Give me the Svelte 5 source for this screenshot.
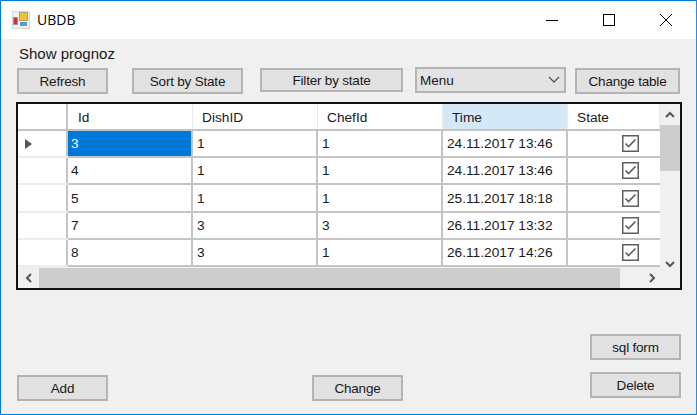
<script>
	const columns = ['Id', 'DishID', 'ChefId', 'Time', 'State'];
	const rows = [
		{ id: 3, dish: 1, chef: 1, time: '24.11.2017 13:46' },
		{ id: 4, dish: 1, chef: 1, time: '24.11.2017 13:46' },
		{ id: 5, dish: 1, chef: 1, time: '25.11.2017 18:18' },
		{ id: 7, dish: 3, chef: 3, time: '26.11.2017 13:32' },
		{ id: 8, dish: 3, chef: 1, time: '26.11.2017 14:26' }
	];
</script>

<div class="window">
	<header class="titlebar">
		<svg class="app-icon" width="18" height="18" viewBox="0 0 18 18">
			<rect width="18" height="18" fill="#d8d8d8" />
			<rect x="1" y="1" width="16" height="16" fill="#f1f1f1" />
			<rect x="7.5" y="1.5" width="8" height="8" fill="#f2c22e" stroke="#b0a080" />
			<rect x="1.5" y="6.5" width="4" height="7" fill="#c8352c" stroke="#999" />
			<rect x="8" y="11" width="7" height="4" fill="#5b9bd5" />
		</svg>
		<span class="title">UBDB</span>
		<div class="controls">
			<svg width="14" height="14" viewBox="0 0 14 14"><path d="M1 7.5h12" stroke="#000" /></svg>
			<svg width="14" height="14" viewBox="0 0 14 14"><rect x="1.5" y="1.5" width="11" height="11" fill="none" stroke="#000" /></svg>
			<svg width="14" height="14" viewBox="0 0 14 14"><path d="M1 1l12 12M13 1L1 13" stroke="#000" /></svg>
		</div>
	</header>

	<main class="content">
		<div class="caption">Show prognoz</div>
		<div class="toolbar">
			<button class="btn w91">Refresh</button>
			<button class="btn sort">Sort by State</button>
			<button class="btn filter">Filter by state</button>
			<div class="combo">
				<span>Menu</span>
				<svg width="12" height="8" viewBox="0 0 12 8"><path d="M1 1l5 5 5-5" fill="none" stroke="#555" stroke-width="1.3" /></svg>
			</div>
			<button class="btn change-table">Change table</button>
		</div>

		<div class="grid">
			<div class="grid-body">
				<div class="grid-rows">
					<div class="row head">
						<div class="cell rowhead"></div>
						{#each columns as col}
							<div class="cell {col.toLowerCase()}" class:active={col === 'Time'}>{col}</div>
						{/each}
					</div>
					{#each rows as r, i}
						<div class="row" class:tall={i === 2}>
							<div class="cell rowhead">
								{#if i === 0}<span class="arrow"></span>{/if}
							</div>
							<div class="cell id" class:selected={i === 0}>{r.id}</div>
							<div class="cell dishid">{r.dish}</div>
							<div class="cell chefid">{r.chef}</div>
							<div class="cell time">{r.time}</div>
							<div class="cell state">
								<svg width="17" height="17" viewBox="0 0 17 17">
									<rect x="0.75" y="0.75" width="15.5" height="15.5" fill="#fff" stroke="#5e5e5e" stroke-width="1.5" />
									<path d="M3.5 8.5l3 3 7-7" fill="none" stroke="#5e5e5e" stroke-width="1.6" />
								</svg>
							</div>
						</div>
					{/each}
				</div>
				<div class="vscroll">
					<svg width="10" height="7" viewBox="0 0 10 7"><path d="M1 6l4-4 4 4" fill="none" stroke="#555" stroke-width="2" /></svg>
					<div class="vtrack"><div class="vthumb"></div></div>
					<svg width="10" height="7" viewBox="0 0 10 7"><path d="M1 1l4 4 4-4" fill="none" stroke="#555" stroke-width="2" /></svg>
				</div>
			</div>
			<div class="hscroll">
				<span class="harrow"><svg width="7" height="10" viewBox="0 0 7 10"><path d="M6 1L2 5l4 4" fill="none" stroke="#555" stroke-width="2" /></svg></span>
				<div class="hthumb"></div>
				<span class="harrow"><svg width="7" height="10" viewBox="0 0 7 10"><path d="M1 1l4 4-4 4" fill="none" stroke="#555" stroke-width="2" /></svg></span>
			</div>
		</div>

		<div class="footer">
			<button class="btn w91">Add</button>
			<button class="btn w91 change">Change</button>
			<div class="side">
				<button class="btn w91">sql form</button>
				<button class="btn w91">Delete</button>
			</div>
		</div>
	</main>
</div>

<style>
	:global(body) {
		margin: 0;
		background: #f0f0f0;
	}
	.window {
		width: 697px;
		height: 415px;
		box-sizing: border-box;
		border: 1px solid #0078d7;
		border-right-color: #2a8cdc;
		display: flex;
		flex-direction: column;
		font-family: 'Liberation Sans', Arial, sans-serif;
		font-size: 13.7px;
		color: #1a1a1a;
		overflow: hidden;
	}
	.titlebar {
		height: 38px;
		flex: none;
		background: #fff;
		display: flex;
		align-items: center;
		padding-left: 11px;
		box-sizing: border-box;
	}
	.app-icon {
		margin-right: 7px;
	}
	.title {
		font-family: 'Open Sans', sans-serif;
		font-size: 14px;
		color: #000;
		padding-bottom: 2px;
	}
	.controls {
		margin-left: auto;
		display: flex;
		gap: 43px;
		padding-right: 23px;
	}
	.content {
		flex: 1;
		background: #f0f0f0;
		padding: 6px 15px 0 16px;
		display: flex;
		flex-direction: column;
	}
	.caption {
		padding-left: 2px;
		height: 23px;
		line-height: 18px;
		font-size: 15px;
	}
	.toolbar {
		display: flex;
		align-items: flex-start;
		height: 34px;
	}
	.btn {
		height: 26px;
		box-sizing: border-box;
		border: 2px solid #b4b4b4;
		background: #e1e1e1;
		font: inherit;
		font-size: 13.5px;
		letter-spacing: -0.2px;
		color: inherit;
		padding: 0;
		flex: none;
	}
	.w91 {
		width: 91px;
	}
	.sort {
		width: 111px;
		margin-left: 24px;
	}
	.filter {
		width: 143px;
		height: 24px;
		margin-left: 17px;
	}
	.combo {
		width: 151px;
		height: 26px;
		margin: -1px 0 0 12px;
		box-sizing: border-box;
		border: 2px solid #b4b4b4;
		background: #e3e3e3;
		display: flex;
		align-items: center;
		justify-content: space-between;
		padding: 0 4px 0 3px;
		font-size: 13.5px;
		flex: none;
	}
	.change-table {
		width: 105px;
		margin-left: 9px;
	}
	.grid {
		width: 666px;
		height: 188px;
		box-sizing: border-box;
		border: 2px solid #111;
		background: #f0f0f0;
		display: flex;
		flex-direction: column;
		flex: none;
		margin-left: -1px;
	}
	.grid-body {
		display: flex;
		height: 164px;
	}
	.grid-rows {
		width: 642px;
	}
	.row {
		display: flex;
		height: 25px;
		margin-bottom: 2px;
		background: #fff;
	}
	.row.tall {
		height: 26px;
	}
	.cell {
		box-sizing: border-box;
		height: 100%;
		display: flex;
		align-items: center;
		padding-left: 4px;
		border-right: 2px solid #c4c4c4;
		box-shadow: 0 2px 0 #c4c4c4;
		flex: none;
	}
	.rowhead {
		width: 50px;
		padding-left: 6px;
		box-shadow: 0 2px 0 #ececec;
	}
	.id,
	.dishid,
	.chefid,
	.time {
		width: 125px;
	}
	.id {
		padding-left: 3px;
	}
	.head .cell {
		padding: 2px 0 0 9px;
		border-right: 1px solid #ececec;
		box-shadow: 0 2px 0 #c4c4c4;
	}
	.head .id {
		padding-left: 10px;
	}
	.head .rowhead {
		border-right: 2px solid #c4c4c4;
	}
	.state {
		width: 92px;
		border-right: 0;
		justify-content: center;
		padding: 0 0 0 32px;
	}
	.head .state {
		justify-content: flex-start;
		padding-left: 9px;
	}
	.active {
		background: #d5e8f7;
	}
	.selected {
		background: #0078d7;
		color: #fff;
	}
	.arrow {
		width: 0;
		height: 0;
		border-left: 7px solid #555;
		border-top: 5px solid transparent;
		border-bottom: 5px solid transparent;
		margin-left: 1px;
	}
	.vscroll {
		width: 20px;
		height: 100%;
		display: flex;
		flex-direction: column;
		align-items: center;
		padding-top: 7px;
		box-sizing: border-box;
	}
	.vtrack {
		flex: 1;
		width: 100%;
		margin: 7px 0 7px;
	}
	.vthumb {
		height: 46px;
		background: #cdcdcd;
	}
	.hscroll {
		flex: 1;
		display: flex;
		align-items: center;
	}
	.harrow {
		width: 21px;
		display: flex;
		justify-content: center;
		flex: none;
	}
	.hthumb {
		width: 581px;
		height: 100%;
		background: #cdcdcd;
		margin-right: 22px;
	}
	.footer {
		flex: 1;
		display: flex;
		align-items: flex-end;
		padding: 0 0 13px 0;
	}
	.change {
		margin-left: 204px;
	}
	.side {
		margin-left: auto;
		display: flex;
		flex-direction: column;
		gap: 12px;
		margin-bottom: 3px;
	}
</style>
